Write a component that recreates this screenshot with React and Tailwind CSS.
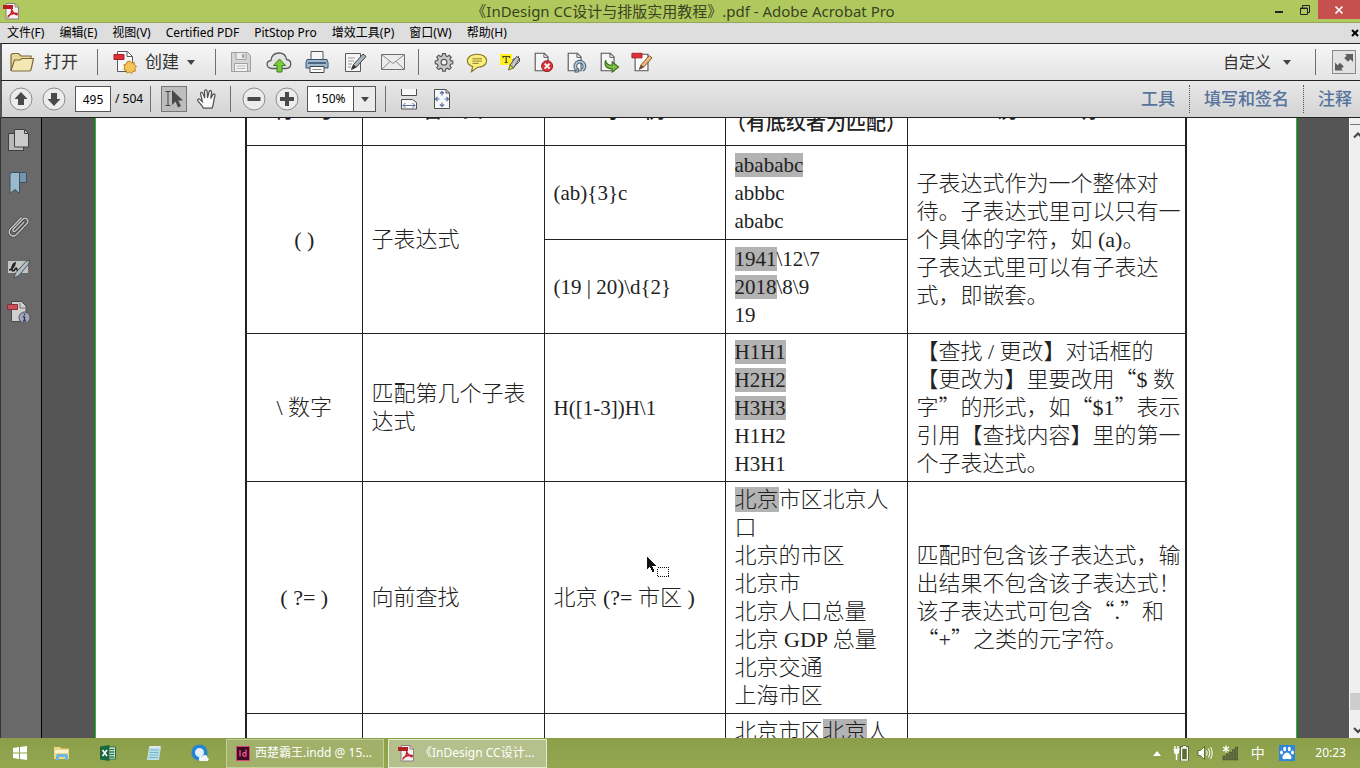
import React from "react";

const UI = "font-['Noto_Sans','Noto_Sans_CJK_SC',sans-serif]";

function Ic({ w = 24, h = 24, vb = "0 0 24 24", children }) {
  return (
    <svg width={w} height={h} viewBox={vb} fill="none" aria-hidden="true" className="shrink-0">
      {children}
    </svg>
  );
}

function PdfLogo({ size = 18 }) {
  return (
    <Ic w={size} h={size} vb="0 0 18 18">
      <path d="M4 1.500h9l3.500 3.500v12H4z" fill="#f4f0f0" stroke="#8d8080" />
      <path d="M13 1.500v3.500h3.500" stroke="#8d8080" />
      <path d="M1 3h10v4H1z" fill="#b21f24" />
      <path d="M9.500 6c.8 2.500 0 6-4 9.500M6 14c3-2.600 6-3.400 10-2.400M9.500 7c.6 2.500 2.500 5 6 6" stroke="#c22126" strokeWidth="1.400" />
    </Ic>
  );
}

function Folder() {
  return (
    <Ic w={26} h={22} vb="0 0 26 22">
      <path d="M2 19V4l1.500-1.500h6L12 5h10v4" fill="#e9d79a" stroke="#7c6a3d" strokeWidth="1.200" />
      <path d="M2 19.500 5.500 9H11l2-1.500h11.500L22 19l-1.500 1H3z" fill="#f5e7b4" stroke="#7c6a3d" strokeWidth="1.200" />
    </Ic>
  );
}

function CreateIcon() {
  return (
    <Ic>
      <path d="M4.500 1.500h10l5 5v15h-15z" fill="#fafafa" stroke="#5c5c5c" />
      <path d="M14 1.500v5h5.500" stroke="#5c5c5c" />
      <path d="M1 4.500h10v5H1z" fill="#dd3038" stroke="#a81e25" />
      <path d="m17 11 1.700 2 2.600-.5.1 2.600 2.100 1.400-1.700 2 .7 2.500-2.600.4L18.500 23.500 16.500 22l-2.500 1-.8-2.500-2.400-.9 1-2.400-1-2.400 2.500-.7.8-2.500z" fill="#f6c35a" stroke="#b98525" />
    </Ic>
  );
}

function SaveIcon() {
  return (
    <Ic>
      <path d="M2.500 2.500h16l3 3v16h-19z" fill="#d4d4d4" stroke="#a0a0a0" />
      <path d="M7 2.500h10v7H7z" fill="#ededed" stroke="#a0a0a0" />
      <path d="M13 4h2.500v4H13z" fill="#a8a8a8" />
      <path d="M5.500 13.500h13v8h-13z" fill="#f3f3f3" stroke="#a0a0a0" />
      <path d="M7.500 16h9M7.500 18.500h9" stroke="#b5b5b5" />
    </Ic>
  );
}

function CloudIcon() {
  return (
    <Ic w={26} vb="0 0 26 24">
      <path d="M6 18.500C-.5 18-.2 11 5 10.500 5.500 5.500 9 3 13 3s7 2.500 7.500 6.500c5.500.5 6 8.500-.5 9z" fill="#e4e4e4" stroke="#5b5b5b" strokeWidth="1.300" />
      <path d="m13.500 9 6 6.500h-3.500v6.500h-5v-6.500H7.500z" fill="#7ccb3c" stroke="#3c7a1d" />
    </Ic>
  );
}

function PrintIcon() {
  return (
    <Ic>
      <path d="M6 1.500h12v9H6z" fill="#f7f7f7" stroke="#555" />
      <path d="M2 9.500h20l1 3v5.500H1v-5.500z" fill="#9fb9cf" stroke="#35506a" />
      <path d="M3 12h18v2H3z" fill="#4b667f" />
      <path d="M5 16.500h14v6H5z" fill="#fff" stroke="#444" />
      <path d="M7.500 19.500h9" stroke="#888" />
    </Ic>
  );
}

function EditIcon() {
  return (
    <Ic>
      <path d="M2.500 3.500h15v18h-15z" fill="#f6f6f6" stroke="#5a5a5a" />
      <path d="M5 8h7M5 11h6M5 14h4M5 17h3" stroke="#9a9a9a" />
      <path d="m8.500 19.500 2-5L20 4l3 2.500L13.500 17z" fill="#a9b6bf" stroke="#444" />
      <path d="m8.500 19.500 2-5 3 2.500z" fill="#333" />
    </Ic>
  );
}

function MailIcon() {
  return (
    <Ic>
      <path d="M.5 4.500h23v15H.5z" fill="#ececec" stroke="#6f6f6f" />
      <path d="m.5 4.500 11.500 9 11.500-9M.5 19.500l8.500-8M23.500 19.500l-8.500-8" stroke="#8a8a8a" />
    </Ic>
  );
}

function GearIcon() {
  return (
    <Ic w={20} h={20}>
      <path d="m10.300 2 3.400 0 .5 2.700 1.800.8 2.300-1.600 2.400 2.400-1.600 2.300.8 1.800 2.600.5v3.200l-2.700.5-.8 1.800 1.600 2.300-2.400 2.400-2.300-1.600-1.800.8-.5 2.700h-3.300l-.5-2.700-1.800-.8-2.300 1.600-2.400-2.400 1.600-2.300-.8-1.800L1.500 14v-3.200l2.600-.5.8-1.800-1.600-2.300 2.400-2.400L8 5.400l1.800-.8z" fill="#c9c9c9" stroke="#585858" strokeWidth="1.400" />
      <circle cx="12" cy="12.300" r="3.500" fill="#f2f2f2" stroke="#585858" strokeWidth="1.400" />
    </Ic>
  );
}

function CommentIcon() {
  return (
    <Ic w={22} h={22}>
      <path d="M12 3.500c6 0 10.500 3 10.500 7.200s-4.500 7-10 7.100L6 22.500l1.300-5.600C3.500 15.700 1.500 13.500 1.500 10.700 1.500 6.500 6 3.500 12 3.500z" fill="#fbf07c" stroke="#84742a" strokeWidth="1.200" />
      <path d="M7 8.500h10.500M7 11h10.500M7 13.500h7" stroke="#84742a" />
    </Ic>
  );
}

function HighlightIcon() {
  return (
    <Ic w={22} h={22} vb="0 0 22 22">
      <path d="M1 3h12v11H1z" fill="#fff023" />
      <path d="M4 7V5.500h6.500V7M7.200 5.500v6M5.700 11.500h3" stroke="#4a4410" strokeWidth="1.200" />
      <path d="M14 12.500V8h5.500V5M15 15.500l5.500-5V7" stroke="#555" />
      <path d="m11 14 6.500-8.500 3 2L14.500 17z" fill="#c3c6c9" stroke="#4a4a4a" />
      <path d="m9.500 19 1.500-5 3.500 3z" fill="#d3e02f" stroke="#6f7220" />
    </Ic>
  );
}

function PageBase() {
  return (
    <>
      <path d="M3.500 2.500h10l4 4v15h-14z" fill="#f5f5f5" stroke="#555" strokeWidth="1.200" />
      <path d="M13 2.500v4.500h4.500" stroke="#555" />
    </>
  );
}

function DeletePageIcon() {
  return (
    <Ic w={22} h={22}>
      <PageBase />
      <circle cx="16.500" cy="16.500" r="6" fill="#d8343c" stroke="#8f1a20" />
      <path d="m13.800 13.800 5.400 5.400m0-5.400-5.400 5.400" stroke="#fff" strokeWidth="2" />
    </Ic>
  );
}

function RotatePageIcon() {
  return (
    <Ic w={22} h={22}>
      <PageBase />
      <path d="M13 20.500a5 5 0 1 1 6 .3" stroke="#40586c" strokeWidth="4" />
      <path d="M13 20.500a5 5 0 1 1 6 .3" stroke="#b4cadb" strokeWidth="2" />
      <path d="M14.500 18.500v4.500H10.500z" fill="#b4cadb" stroke="#40586c" />
    </Ic>
  );
}

function ExtractIcon() {
  return (
    <Ic w={22} h={22}>
      <PageBase />
      <path d="M8.500 10c0 4 2.500 5.500 7 5.500v-3.500l7 5.500-7 5.500V19.500C9.500 19.500 6 16 8.500 10z" fill="#7fbf45" stroke="#386c1a" strokeWidth="1.200" />
    </Ic>
  );
}

function EditPdfIcon() {
  return (
    <Ic w={22} h={22}>
      <path d="M4.500 3.500h14v18h-14z" fill="#fafafa" stroke="#555" strokeWidth="1.200" />
      <path d="M1 2.500h11v5H1z" fill="#dd3038" stroke="#a81e25" />
      <path d="m9 20 2-5L20 5l3 2.500L14 17.500z" fill="#f0b878" stroke="#7a4d25" />
      <path d="m9 20 2-5 3 2.500z" fill="#6b4a30" />
    </Ic>
  );
}

function RoundBtnIcon({ children }) {
  return (
    <Ic>
      <circle cx="12" cy="12" r="11" fill="#ececec" stroke="#8b8b8b" />
      {children}
    </Ic>
  );
}

function HandIcon() {
  return (
    <Ic w={22} h={22}>
      <path d="M8 22c-1-3-4-5.500-6-8-1-1.500.8-2.700 2.200-1.600L7 15 5 6.500c-.4-2 2-2.500 2.600-.6L9.500 11 9.300 3.500c0-2 2.600-2 2.800 0l.5 7.300L14.300 4c.5-1.800 3-1.300 2.700.6L16 11.500l2.300-4.200c1-1.500 3-.6 2.400 1.100C19 13 19.500 18 17.500 22z" fill="#fbfbfb" stroke="#4f4f4f" strokeWidth="1.300" />
    </Ic>
  );
}

function FitWidthIcon() {
  return (
    <Ic w={20} h={22} vb="0 0 20 22">
      <path d="M2.500 1v6.500h15V1" fill="#f8f8f8" stroke="#4e4e4e" />
      <path d="M2.500 21v-9.500h11l4 3V21z" fill="#f8f8f8" stroke="#4e4e4e" />
      <path d="M4 17.500h12M6.500 15 4 17.500 6.500 20M13.500 15l2.500 2.500-2.500 2.500" stroke="#5a72a8" />
    </Ic>
  );
}

function FitPageIcon() {
  return (
    <Ic w={20} h={22} vb="0 0 20 22">
      <path d="M2.500 1.500h11.500l3.500 3.500v15.500h-15z" fill="#f8f8f8" stroke="#4e4e4e" />
      <path d="M14 1.500V5h3.500" stroke="#4e4e4e" />
      <path d="M10 3.500v4M10 14.500v4M3.500 11h4M12.500 11h4M8 5.500l2-2 2 2M8 16.500l2 2 2-2M5.500 9l-2 2 2 2M14.500 9l2 2-2 2" stroke="#5a72a8" strokeWidth="1.200" />
    </Ic>
  );
}

function Sep() {
  return <span className="h-[26px] w-px shrink-0 bg-[#6f6f6f]" />;
}

function Dots() {
  return <span className="h-7 shrink-0 border-l border-dotted border-[#555]" />;
}

function Caret() {
  return (
    <svg width="8" height="5" viewBox="0 0 8 5" aria-hidden="true">
      <path d="M0 0h8L4 5z" fill="#444" />
    </svg>
  );
}

function IconBtn({ label, className, children }) {
  return (
    <button aria-label={label} className={`flex shrink-0 items-center justify-center ${className}`}>
      {children}
    </button>
  );
}

const menus = ["文件(F)", "编辑(E)", "视图(V)", "Certified PDF", "PitStop Pro", "增效工具(P)", "窗口(W)", "帮助(H)"];

function TitleBar() {
  return (
    <header className="flex h-[23px] shrink-0 items-center border-b border-[#95a65a] bg-[#b0c95f]">
      <span className="flex w-[100px] pl-0.5">
        <PdfLogo size={18} />
      </span>
      <h1 className="flex-1 text-center text-[15px] leading-[22px] text-[#3a4321]">《InDesign CC设计与排版实用教程》.pdf - Adobe Acrobat Pro</h1>
      <div className="flex h-full items-start">
        <IconBtn label="最小化" className="h-[19px] w-[26px]">
          <Ic w={10} h={10} vb="0 0 10 10"><path d="M1 7h8" stroke="#222" strokeWidth="2" /></Ic>
        </IconBtn>
        <IconBtn label="还原" className="h-[19px] w-[26px]">
          <Ic w={12} h={12} vb="0 0 12 12"><path d="M1.500 4h7v6.500h-7zM1 4.500h8M3.500 3.500v-2h7v7h-1.500" stroke="#222" /></Ic>
        </IconBtn>
        <IconBtn label="关闭" className="h-[19px] w-[42px] bg-[#c5504e]">
          <Ic w={10} h={10} vb="0 0 10 10"><path d="m1.500 1.500 7 7m0-7-7 7" stroke="#fff" strokeWidth="1.700" /></Ic>
        </IconBtn>
      </div>
    </header>
  );
}

function MenuBar() {
  return (
    <nav className="flex h-5 shrink-0 items-center justify-between bg-[#dedede] pl-[7px] text-xs text-black">
      <div className="flex gap-[15px]">
        {menus.map((m) => (
          <button key={m} className="whitespace-nowrap">{m}</button>
        ))}
      </div>
      <IconBtn label="关闭文档" className="h-5 w-[10px]">
        <Ic w={8} h={8} vb="0 0 8 8"><path d="m1 1 6 6m0-6L1 7" stroke="#000" strokeWidth="2" /></Ic>
      </IconBtn>
    </nav>
  );
}

function MainToolbar() {
  return (
    <div className="flex h-[38px] shrink-0 items-center border-y border-l-2 border-t-[#222] border-b-[#222] border-l-[#555] bg-gradient-to-b from-[#f6f6f6] to-[#e4e4e4]">
      <button className="flex w-[95px] items-center gap-[9px] pl-[7px] text-[17px] text-[#333]"><Folder />打开</button>
      <Sep />
      <button className="flex w-[117px] items-center gap-2 pl-[15px] text-[17px] text-[#333]"><CreateIcon />创建<Caret /></button>
      <Sep />
      <div className="flex pl-[6px]">
        <IconBtn label="保存" className="w-[38px]"><SaveIcon /></IconBtn>
        <IconBtn label="上传" className="w-[38px]"><CloudIcon /></IconBtn>
        <IconBtn label="打印" className="w-[38px]"><PrintIcon /></IconBtn>
        <IconBtn label="编辑" className="w-[38px]"><EditIcon /></IconBtn>
        <IconBtn label="邮件" className="w-[38px]"><MailIcon /></IconBtn>
      </div>
      <span className="w-[6px]" />
      <Sep />
      <div className="flex pl-2">
        <IconBtn label="设置" className="w-[33px]"><GearIcon /></IconBtn>
        <IconBtn label="附注" className="w-[33px]"><CommentIcon /></IconBtn>
        <IconBtn label="高亮" className="w-[33px]"><HighlightIcon /></IconBtn>
        <IconBtn label="删除页面" className="w-[33px]"><DeletePageIcon /></IconBtn>
        <IconBtn label="旋转页面" className="w-[33px]"><RotatePageIcon /></IconBtn>
        <IconBtn label="提取页面" className="w-[33px]"><ExtractIcon /></IconBtn>
        <IconBtn label="编辑 PDF" className="w-[33px]"><EditPdfIcon /></IconBtn>
      </div>
      <button className="ml-auto mr-6 flex items-center gap-3 text-base text-[#333]">自定义<Caret /></button>
      <Sep />
      <IconBtn label="阅读模式" className="ml-4 mr-1 h-6 w-6 border border-[#888] bg-[#e2e2e2]">
        <Ic w={20} h={20} vb="0 0 20 20">
          <path d="M11 2H19v8L16.300 7.300 14 9.800 10.200 6l2.500-2.300zM9 18.500H1v-8l2.700 2.700L6 10.700l3.800 3.800-2.500 2.300z" fill="#5f5f5f" />
        </Ic>
      </IconBtn>
    </div>
  );
}

function NavToolbar() {
  return (
    <div className="flex h-[37px] shrink-0 items-center border-b border-l-2 border-b-[#222] border-l-[#555] bg-gradient-to-b from-[#e8e8e8] to-[#d3d3d3] pl-[2px] text-black">
      <IconBtn label="上一页" className="w-[33px]">
        <RoundBtnIcon><path d="m12 5 6.500 7H15v6H9v-6H5.500z" fill="#4a4a4a" /></RoundBtnIcon>
      </IconBtn>
      <IconBtn label="下一页" className="w-[33px]">
        <RoundBtnIcon><path d="m12 19 6.500-7H15V6H9v6H5.500z" fill="#4a4a4a" /></RoundBtnIcon>
      </IconBtn>
      <input aria-label="页码" defaultValue="495" className="ml-[5px] h-[26px] w-9 border border-[#555] bg-white text-center text-xs" />
      <span className="w-[39px] pl-1 text-xs">/ 504</span>
      <Sep />
      <IconBtn label="选择工具" className="ml-[10px] h-[26px] w-[26px] border border-[#777] bg-[#bdbdbd]">
        <Ic w={20} h={20} vb="0 0 20 20">
          <path d="M1.500 2.500h5M1.500 16.500h5M4 2.500v14" stroke="#444" />
          <path d="M8 1v15l3.500-3.500 2.500 6 3-1.500-2.700-5.500H19z" fill="#4a4a4a" />
        </Ic>
      </IconBtn>
      <IconBtn label="手形工具" className="ml-[5px] w-[30px]"><HandIcon /></IconBtn>
      <span className="w-2" />
      <Sep />
      <IconBtn label="缩小" className="ml-[6px] w-[33px]">
        <RoundBtnIcon><path d="M5.500 10h13v4h-13z" fill="#4a4a4a" /></RoundBtnIcon>
      </IconBtn>
      <IconBtn label="放大" className="w-[33px]">
        <RoundBtnIcon><path d="M10 5h4v5h5v4h-5v5h-4v-5H5v-4h5z" fill="#4a4a4a" /></RoundBtnIcon>
      </IconBtn>
      <div className="relative ml-1 h-[26px] w-[69px] border border-[#555]">
        <select aria-label="缩放" className="block h-full w-full appearance-none bg-white pl-[7px] text-xs">
          <option>150%</option>
        </select>
        <span className="pointer-events-none absolute inset-y-0 right-0 flex w-[22px] items-center justify-center border-l border-[#555] bg-[#ececec]"><Caret /></span>
      </div>
      <span className="w-[9px]" />
      <Sep />
      <IconBtn label="适合宽度" className="ml-[6px] w-[33px]"><FitWidthIcon /></IconBtn>
      <IconBtn label="适合页面" className="w-[33px]"><FitPageIcon /></IconBtn>
      <div className="ml-auto flex items-center gap-[14px] pr-2 text-[17px] font-medium text-[#55739c]">
        <button>工具</button>
        <Dots />
        <button>填写和签名</button>
        <Dots />
        <button>注释</button>
      </div>
    </div>
  );
}

function Sidebar() {
  return (
    <aside className="flex w-[42px] shrink-0 flex-col border-l border-r border-l-[#333] border-r-black bg-[#696969]">
      <IconBtn label="页面缩略图" className="h-[43px] w-9">
        <Ic>
          <path d="M1.500 5.500h15v17h-15z" fill="#b9b9b9" stroke="#3f3f3f" />
          <path d="M7.500 1.500h10l4 4v13.500h-14z" fill="#cbcbcb" stroke="#3f3f3f" />
          <path d="M17.500 1.500v4h4" stroke="#3f3f3f" />
        </Ic>
      </IconBtn>
      <IconBtn label="书签" className="h-[43px] w-9">
        <Ic>
          <path d="M12 1.500h6.500q1 0 1 1v9H12z" fill="#7396ad" stroke="#3f505c" />
          <path d="M3 22.500V3.500q0-2 2-2h9q-1.500 0-1.500 2v19L8 18.500z" fill="#9ab9cc" stroke="#3f505c" />
        </Ic>
      </IconBtn>
      <IconBtn label="附件" className="h-[43px] w-9">
        <Ic>
          <path d="M17 8 8.500 17c-1.500 1.500-3.500-.5-2-2L15.500 5.500c3-3 7.500.8 4.500 4L9.500 20.500c-4 4-10-1-6-5.500L14.500 3.500" stroke="#3c3c3c" strokeWidth="2.600" />
          <path d="M17 8 8.500 17c-1.500 1.500-3.500-.5-2-2L15.500 5.500c3-3 7.500.8 4.500 4L9.500 20.500c-4 4-10-1-6-5.500L14.500 3.500" stroke="#c4c4c4" strokeWidth="1.500" />
        </Ic>
      </IconBtn>
      <IconBtn label="签名" className="h-[43px] w-9">
        <Ic>
          <path d="M1 4h20v12H1z" fill="#c4c4c4" />
          <path d="M2 13c3 0 6-5 6-7-3 1-4 8-2 8s2-3 3-3 0 2 2 2" stroke="#222" strokeWidth="1.700" />
          <path d="m7 21 1.500-5L19 4.500l4-1.500-1.500 4L12 18.500z" fill="#b3bec4" stroke="#46525a" />
        </Ic>
      </IconBtn>
      <IconBtn label="文档信息" className="h-[43px] w-9">
        <Ic>
          <path d="M4.500 1.500h10l4.500 4.500v15.500H4.500z" fill="#d0d0d0" stroke="#4a4a4a" />
          <path d="M13 3v5h5" stroke="#777" />
          <path d="M.5 4.500h10v5H.5z" fill="#c9505b" stroke="#8b2d36" />
          <circle cx="17.500" cy="17.500" r="5.500" fill="#a3a7b8" stroke="#4d5061" />
          <path d="M17.500 16.500v4.500M16 16.700h1.500M16 21h3M17.500 13.500v1.700" stroke="#333a55" strokeWidth="1.500" />
        </Ic>
      </IconBtn>
    </aside>
  );
}

function Mark({ children }) {
  return <mark className="bg-[#b3b3b3] text-inherit">{children}</mark>;
}

function Q({ children }) {
  return <span className="font-['Noto_Sans_CJK_SC',sans-serif] leading-none">{children}</span>;
}

function Lines({ items }) {
  return items.map((l, i) => (
    <div key={i} className="whitespace-nowrap">{l}</div>
  ));
}

const td = "border border-[#222] pl-[9px] pr-1";
const tdCenter = "border border-[#222] px-1 text-center";
const th = "border border-[#222] pt-3 pb-2 text-center text-xl leading-7 font-medium whitespace-nowrap";
const thTall = "border border-[#222] py-2 text-center text-xl leading-7 font-medium whitespace-nowrap";

function RegexTable() {
  return (
    <table className="-mt-[47px] w-full table-fixed border-collapse border-2 border-[#222] font-['Liberation_Serif','Noto_Sans_CJK_SC',serif] text-[22px] leading-7 font-light text-[#222]">
      <colgroup>
        <col className="w-[116px]" />
        <col className="w-[182px]" />
        <col className="w-[181px]" />
        <col className="w-[182px]" />
        <col />
      </colgroup>
      <thead>
        <tr>
          <th className={th}>符　号</th>
          <th className={th}>含　义</th>
          <th className={th}>示　例</th>
          <th className={thTall}>目标文本<br />（有底纹者为匹配）</th>
          <th className={th}>说　　　明</th>
        </tr>
      </thead>
      <tbody>
        <tr className="h-[94px]">
          <td rowSpan={2} className={tdCenter}>( )</td>
          <td rowSpan={2} className={td}>子表达式</td>
          <td className={`${td} text-[21px]`}>(ab){"{3}"}c</td>
          <td className={`${td} text-[21px]`}>
            <Lines items={[<Mark>abababc</Mark>, "abbbc", "ababc"]} />
          </td>
          <td rowSpan={2} className={td}>
            <Lines items={["子表达式作为一个整体对", "待。子表达式里可以只有一", "个具体的字符，如 (a)。", "子表达式里可以有子表达", "式，即嵌套。"]} />
          </td>
        </tr>
        <tr className="h-[94px]">
          <td className={`${td} text-[21px]`}>(19 | 20)\d{"{2}"}</td>
          <td className={`${td} text-[21px]`}>
            <Lines items={[<><Mark>1941</Mark>\12\7</>, <><Mark>2018</Mark>\8\9</>, "19"]} />
          </td>
        </tr>
        <tr className="h-[148px]">
          <td className={tdCenter}>\ 数字</td>
          <td className={td}>
            <Lines items={["匹配第几个子表", "达式"]} />
          </td>
          <td className={`${td} text-[21px]`}>H([1-3])H\1</td>
          <td className={`${td} text-[21px]`}>
            <Lines items={[<Mark>H1H1</Mark>, <Mark>H2H2</Mark>, <Mark>H3H3</Mark>, "H1H2", "H3H1"]} />
          </td>
          <td className={td}>
            <Lines
              items={[
                "【查找 / 更改】对话框的",
                <>【更改为】里要改用<Q>“</Q>$ 数</>,
                <>字<Q>”</Q>的形式，如<Q>“</Q>$1<Q>”</Q>表示</>,
                "引用【查找内容】里的第一",
                "个子表达式。",
              ]}
            />
          </td>
        </tr>
        <tr className="h-[232px]">
          <td className={tdCenter}>( ?= )</td>
          <td className={td}>向前查找</td>
          <td className={td}>北京 (?= 市区 )</td>
          <td className={td}>
            <Lines items={[<><Mark>北京</Mark>市区北京人</>, "口", "北京的市区", "北京市", "北京人口总量", "北京 GDP 总量", "北京交通", "上海市区"]} />
          </td>
          <td className={td}>
            <Lines
              items={[
                "匹配时包含该子表达式，输",
                "出结果不包含该子表达式！",
                <>该子表达式可包含<Q>“</Q>.<Q>”</Q>和</>,
                <><Q>“</Q>+<Q>”</Q>之类的元字符。</>,
              ]}
            />
          </td>
        </tr>
        <tr>
          <td className={td} />
          <td className={td} />
          <td className={td} />
          <td className={`${td} py-1`}>
            <Lines items={[<>北京市区<Mark>北京</Mark>人</>, "口"]} />
          </td>
          <td className={td} />
        </tr>
      </tbody>
    </table>
  );
}

function Pointer() {
  return (
    <svg width="24" height="24" viewBox="0 0 24 24" aria-hidden="true" shapeRendering="crispEdges" className="pointer-events-none absolute top-[438px] left-[604px]">
      <path d="M1 0v13l3-2.500L6.500 16l2-1L6 9.500h4z" fill="#111" />
      <path d="M11.500 11.500h11v9h-11z" fill="#fff" stroke="#111" strokeDasharray="1 1" />
    </svg>
  );
}

function Scrollbar() {
  return (
    <div className="flex w-[11px] shrink-0 flex-col items-end overflow-hidden border-l border-white bg-[#efefef]">
      <div className="h-[7px] w-full border-b border-[#777]" />
      <button aria-label="向上滚动" className="pt-[6px]">
        <Ic w={7} h={8} vb="0 0 7 8"><path d="m1 6.500 4-4 4 4" stroke="#444" strokeWidth="2" /></Ic>
      </button>
      <div className="mt-auto h-[17px] w-full bg-[#cdcdcd]" />
      <button aria-label="向下滚动" className="pt-4 pb-1">
        <Ic w={7} h={8} vb="0 0 7 8"><path d="m1 2 4 4 4-4" stroke="#444" strokeWidth="2" /></Ic>
      </button>
    </div>
  );
}

function Taskbar() {
  return (
    <footer className="flex h-[30px] shrink-0 items-center bg-gradient-to-b from-[#8b9f4a] to-[#94a650] text-xs text-white">
      <IconBtn label="开始" className="h-full w-[39px]">
        <Ic w={14} h={14} vb="0 0 14 14"><path d="m0 2 6-1v5.500H0zM7 .9 14 0v6.500H7zM0 7.500h6V13l-6-1zM7 7.500h7V14l-7-1z" fill="#fff" /></Ic>
      </IconBtn>
      <IconBtn label="资源管理器" className="h-full w-[46px]">
        <Ic w={16} h={16} vb="0 0 16 16">
          <path d="M0 2h6l1.500 1.500H15V14H0z" fill="#f0d788" />
          <path d="M1 5h13v3H1z" fill="#fbf3cd" />
          <path d="M2 15v-4q0-2 2-2h8q2 0 2 2v4h-3v-3H5v3z" fill="#6fb7e0" />
        </Ic>
      </IconBtn>
      <IconBtn label="Excel" className="h-full w-[46px]">
        <Ic w={16} h={16} vb="0 0 16 16">
          <path d="M8 2h7.500v12H8z" fill="#fff" stroke="#1c7044" />
          <path d="M9.500 4.500h5M9.500 7h5M9.500 9.500h5M9.500 12h5" stroke="#1c7044" strokeWidth="1.500" />
          <path d="M0 1.500 9.500 0v16L0 14.500z" fill="#17693d" />
          <path d="m2.500 5 4.500 6M7 5l-4.500 6" stroke="#fff" strokeWidth="1.600" />
        </Ic>
      </IconBtn>
      <IconBtn label="记事本" className="h-full w-[46px]">
        <Ic w={16} h={16} vb="0 0 16 16">
          <path d="M3 2h12l-2 13H1z" fill="#b9e0ea" />
          <path d="M3.500 1h11v2h-11z" fill="#dfe9ea" />
          <path d="M4 5h9M3.700 7.500h9M3.400 10h9M3 12.500h9" stroke="#79b4c5" />
        </Ic>
      </IconBtn>
      <IconBtn label="浏览器" className="h-full w-[46px]">
        <Ic w={18} h={18} vb="0 0 18 18">
          <circle cx="8.500" cy="8.500" r="5" fill="#e4f1fa" />
          <circle cx="8.500" cy="8.500" r="6.300" stroke="#2384d2" strokeWidth="3.600" />
          <path d="M8 16.500c-1-3.500 1.500-5 3.500-4 1.500-2.500 5-1.500 4.700 1 2 .3 2 3.500-.7 3.500H9z" fill="#f2f9fd" />
        </Ic>
      </IconBtn>
      <button className="ml-[3px] flex h-[29px] w-[158px] items-center gap-[5px] border border-[#c3ce95] bg-[#a2b069] pl-[9px] whitespace-nowrap">
        <Ic w={14} h={15} vb="0 0 14 15">
          <path d="M.5.5h13v14H.5z" fill="#3d0c22" stroke="#d6437f" />
          <path d="M4 4v6.500M10 3.500v7M10 7.500c-1-1.500-3.200-1-3.200 1s2.200 2.500 3.200 1" stroke="#f0578f" strokeWidth="1.300" />
        </Ic>
        西楚霸王.indd @ 15...
      </button>
      <button className="ml-1 flex h-[29px] w-[159px] items-center gap-[5px] border border-[#e3ead0] bg-[#b5c08d] pl-2 whitespace-nowrap">
        <PdfLogo size={18} />
        《InDesign CC设计...
      </button>
      <div className="ml-auto flex items-center pr-[14px]">
        <IconBtn label="显示隐藏的图标" className="w-6">
          <Ic w={8} h={5} vb="0 0 8 5"><path d="m4 0 4 5H0z" fill="#fff" /></Ic>
        </IconBtn>
        <IconBtn label="电源" className="w-6">
          <Ic w={16} h={16} vb="0 0 16 16">
            <path d="M8.500 3h6v12.500h-6zM10 1.500h3" stroke="#3c461d" strokeWidth="3" />
            <path d="M8.500 3h6v12h-6zM10 1.500h3" fill="#5d6b30" stroke="#fff" strokeWidth="1.400" />
            <path d="M2 1v3M5 1v3M.5 4.500h6M3.500 9v6" stroke="#fff" strokeWidth="1.400" />
            <path d="M1 4.500h5V8L3.500 10 1 8z" fill="#fff" />
          </Ic>
        </IconBtn>
        <IconBtn label="音量" className="w-6">
          <Ic w={16} h={16} vb="0 0 16 16">
            <path d="M1 5.500h2.500L7.500 1.500v13l-4-4H1z" fill="#fff" stroke="#4b5724" strokeWidth=".8" />
            <path d="M9.500 5.500q1.500 2.500 0 5M11.500 3.500q3 4.500 0 9M13.500 2q3.500 6 0 12" stroke="#fff" />
          </Ic>
        </IconBtn>
        <IconBtn label="网络" className="w-[26px]">
          <Ic w={16} h={16} vb="0 0 16 16">
            <path d="M1 11h2v4H1zM4.200 9h2v6h-2zM7.400 7h2v8h-2zM10.600 4.500h2V15h-2zM13.600 2h2v13h-2z" fill="#6b7454" stroke="#3b441f" strokeWidth=".6" />
            <path d="M4 .5v7M1 2l6 4M7 2 1 6" stroke="#fff" strokeWidth="1.300" />
          </Ic>
        </IconBtn>
        <button className="w-[29px] text-center text-sm">中</button>
        <IconBtn label="输入法" className="w-[29px]">
          <Ic w={16} h={16} vb="0 0 16 16">
            <path d="M0 0h16v16H0z" fill="#2f86d8" />
            <path d="M8 7.500c2 0 5 3.500 4.500 5.500-.5 1.800-2.500 1-4.500 1s-4 .8-4.500-1C3 11 6 7.500 8 7.500z" fill="#fff" />
            <ellipse cx="5.700" cy="4" rx="1.500" ry="2.200" fill="#fff" />
            <ellipse cx="10.300" cy="4" rx="1.500" ry="2.200" fill="#fff" />
            <ellipse cx="2.500" cy="7.500" rx="1.400" ry="2" fill="#fff" />
            <ellipse cx="13.500" cy="7.500" rx="1.400" ry="2" fill="#fff" />
          </Ic>
        </IconBtn>
        <time className="pl-[14px] text-xs">20:23</time>
      </div>
    </footer>
  );
}

export default function App() {
  return (
    <div className={`flex h-screen flex-col overflow-hidden ${UI}`}>
      <TitleBar />
      <MenuBar />
      <MainToolbar />
      <NavToolbar />
      <div className="flex min-h-0 flex-1">
        <Sidebar />
        <main className="relative flex min-w-0 flex-1 overflow-hidden bg-[#555] pr-[52px] pl-[53px]">
          <div className="flow-root min-w-0 flex-1 border-x border-[#14c41e] bg-white pr-[109px] pl-[149px]">
            <RegexTable />
          </div>
          <Pointer />
        </main>
        <Scrollbar />
      </div>
      <Taskbar />
    </div>
  );
}
